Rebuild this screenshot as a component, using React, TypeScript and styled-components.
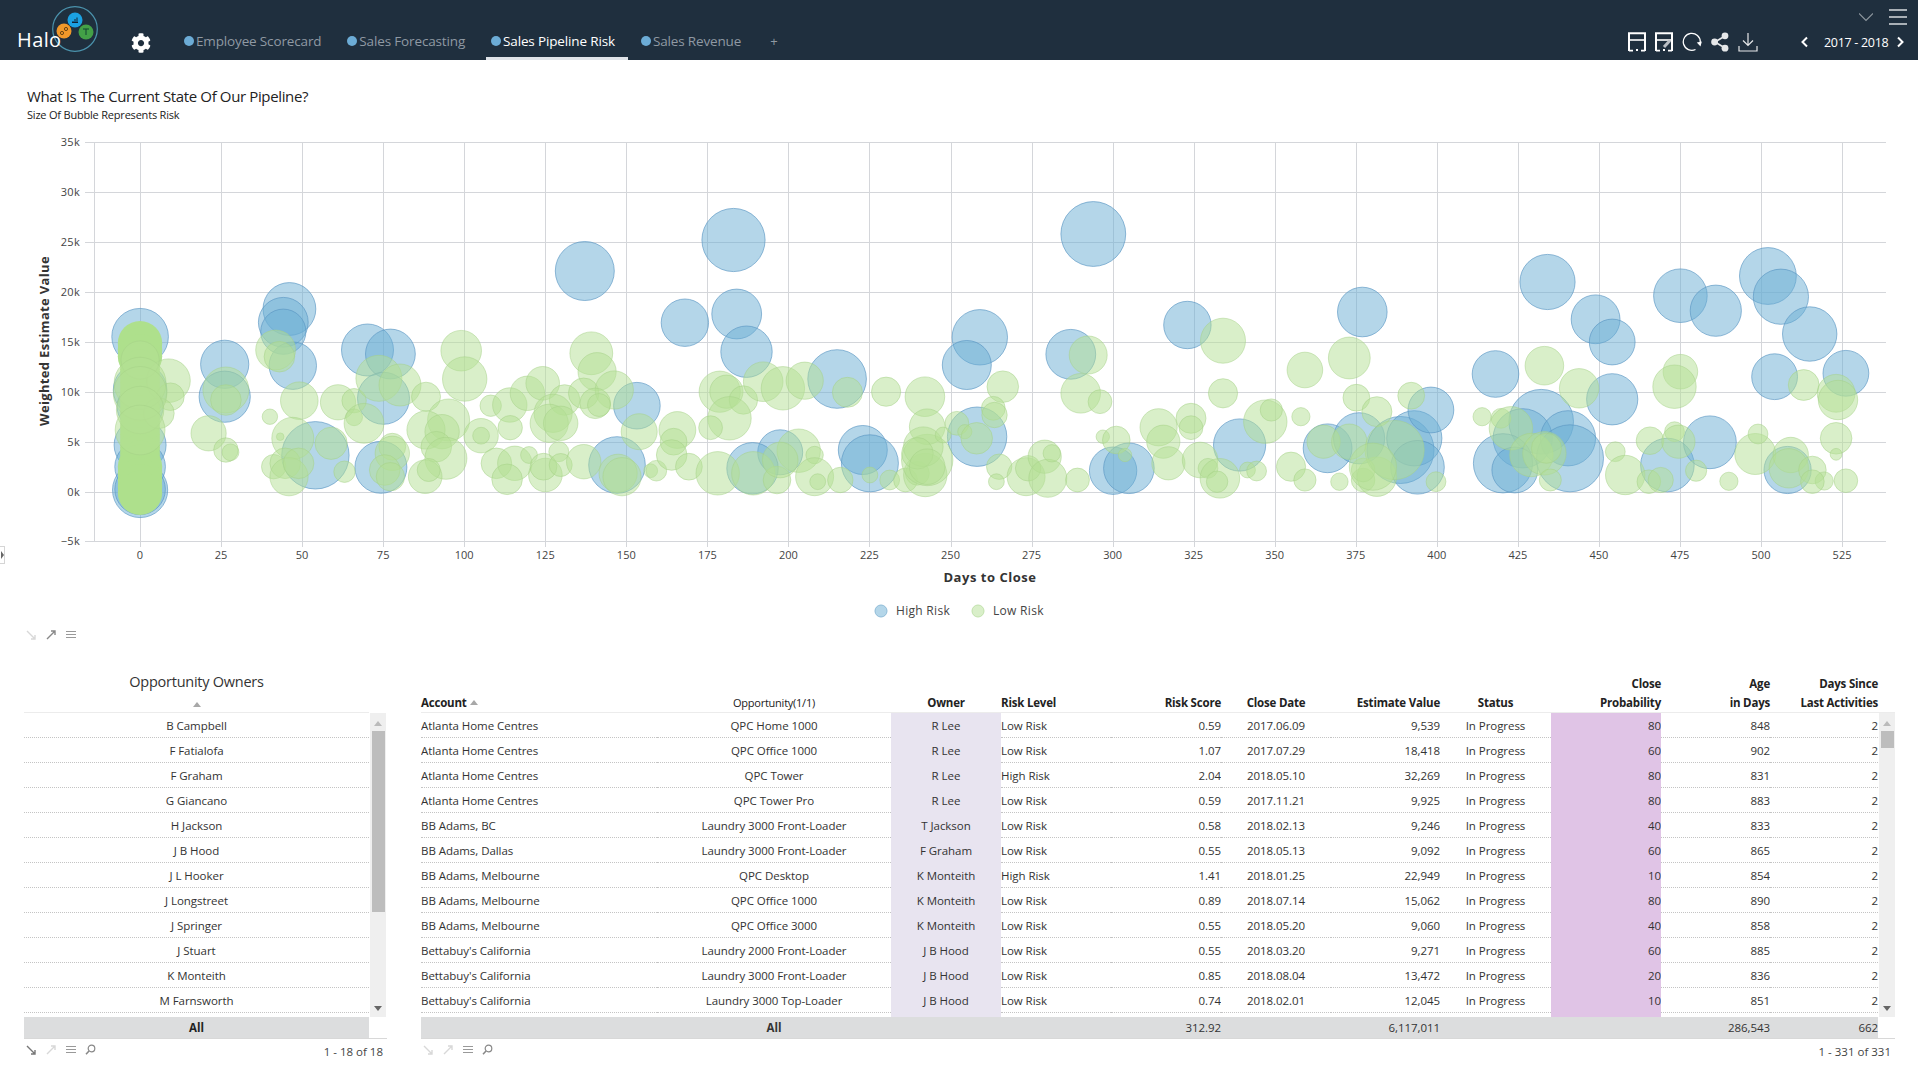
import React from "react";
import styled, { createGlobalStyle } from "styled-components";
import { FaCog } from "react-icons/fa";

const FONT = `"Open Sans", "Noto Sans", "Liberation Sans", sans-serif`;

const Global = createGlobalStyle`
  html, body { margin: 0; padding: 0; background: #fff; }
  body { font-family: ${FONT}; color: #333; overflow: hidden; }
`;

const Page = styled.div`
  width: 1918px;
  height: 1079px;
  position: relative;
  overflow: hidden;
  background: #fff;
`;

/* ---------- header ---------- */
const Header = styled.header`
  height: 60px;
  background: #1f2f3e;
  display: flex;
  align-items: stretch;
`;
const Logo = styled.div`
  position: relative;
  width: 117px;
  flex: none;
`;
const LogoWord = styled.span`
  position: absolute;
  left: 17px;
  top: 26px;
  font-size: 20px;
  line-height: 28px;
  color: #fff;
  letter-spacing: 0.4px;
`;
const LogoMark = styled.svg`
  position: absolute;
  left: 50px;
  top: 4px;
`;
const GearWrap = styled.div`
  width: 62px;
  flex: none;
  color: #fff;
  display: flex;
  align-items: flex-end;
  padding: 0 0 7px 14px;
  box-sizing: border-box;
`;
const Tabs = styled.nav`
  display: flex;
  gap: 8px;
  flex: 1;
`;
const Tab = styled.div<{ $active?: boolean }>`
  height: 60px;
  box-sizing: border-box;
  padding: 32px 13px 0 5px;
  display: flex;
  align-items: flex-start;
  gap: 2px;
  font-size: 13.5px;
  line-height: 18px;
  letter-spacing: -0.15px;
  color: ${(p) => (p.$active ? "#fff" : "#8f99a3")};
  border-bottom: 3px solid ${(p) => (p.$active ? "#dfe3e8" : "transparent")};
`;
const Dot = styled.i`
  width: 10px;
  height: 10px;
  border-radius: 50%;
  background: #6cacd6;
  margin-top: 4px;
  flex: none;
`;
const Plus = styled.div`
  padding: 32px 0 0 8px;
  font-size: 13px;
  line-height: 18px;
  color: #8f99a3;
`;
const HeadRight = styled.div`
  width: 300px;
  flex: none;
  display: flex;
  flex-direction: column;
`;
const HeadTop = styled.div`
  height: 31px;
  display: flex;
  justify-content: flex-end;
  align-items: center;
  padding: 3px 11px 0 0;
  box-sizing: border-box;
  gap: 16px;
`;
const HeadBottom = styled.div`
  display: flex;
  align-items: center;
  color: #fff;
  padding: 1px 0 0 10px;
`;
const IconGroup = styled.div`
  display: flex;
  align-items: center;
  gap: 9px;
  width: 177px;
  flex: none;
`;
const YearNav = styled.div`
  display: flex;
  align-items: center;
  font-size: 12.5px;
  letter-spacing: -0.3px;
  color: #fff;
  gap: 13px;
  margin-left: -6px;
`;
const YearLabel = styled.span`
  margin-right: -7px;
`;

/* ---------- chart ---------- */
const ChartTitle = styled.h1`
  margin: 0;
  padding: 26px 0 0 27px;
  font-size: 15px;
  line-height: 20px;
  font-weight: 400;
  letter-spacing: -0.37px;
  color: #222;
`;
const ChartSub = styled.p`
  margin: 0;
  padding: 1px 0 0 27px;
  font-size: 11px;
  line-height: 16px;
  letter-spacing: -0.2px;
  color: #222;
`;
const ChartSvg = styled.svg`
  display: block;
  width: 1918px;
  height: 496px;
  margin-top: 7px;
  font-family: ${FONT};
`;
const Tools = styled.div<{ $pad?: number }>`
  display: flex;
  align-items: center;
  height: 14px;
  gap: 9px;
  padding-left: ${(p) => p.$pad ?? 8}px;
`;
const ChartToolRow = styled.div`
  padding: 1px 0 0 18px;
  height: 14px;
`;
const EdgeHandle = styled.div`
  position: absolute;
  left: -1px;
  top: 546px;
  width: 6px;
  height: 18px;
  border: 1px solid #d5d5d5;
  box-sizing: border-box;
  background: #fff;
  &::after {
    content: "";
    position: absolute;
    left: 1px;
    top: 4px;
    border-left: 3px solid #666;
    border-top: 4px solid transparent;
    border-bottom: 4px solid transparent;
  }
`;

/* ---------- lower grids ---------- */
const Lower = styled.section`
  display: flex;
  padding: 31px 0 0 24px;
  gap: 34px;
  align-items: flex-start;
`;
const Panel = styled.div<{ $w: number }>`
  width: ${(p) => p.$w}px;
  flex: none;
`;
const OwnersTitle = styled.div`
  width: 345px;
  height: 27px;
  text-align: center;
  font-size: 14.5px;
  line-height: 20px;
  letter-spacing: -0.25px;
  color: #333;
`;
const OwnersHead = styled.div`
  height: 13px;
  display: flex;
  justify-content: center;
  border-bottom: 1px solid #ececec;
  width: 345px;
`;
const Caret = styled.i<{ $up?: boolean; $tone?: string }>`
  display: inline-block;
  width: 0;
  height: 0;
  border-left: 4px solid transparent;
  border-right: 4px solid transparent;
  ${(p) =>
    p.$up
      ? `border-bottom: 5px solid ${p.$tone ?? "#a8a8a8"};`
      : `border-top: 5px solid ${p.$tone ?? "#777"};`}
`;
const OwnersCaret = styled(Caret)`
  margin-top: 3px;
`;
const Body = styled.div`
  display: flex;
  height: 304px;
  overflow: hidden;
`;
const Rows = styled.div<{ $w: number }>`
  width: ${(p) => p.$w}px;
  flex: none;
`;
const OwnerRow = styled.div`
  height: 25px;
  line-height: 25px;
  box-sizing: border-box;
  border-bottom: 1px dotted #c4c4c4;
  text-align: center;
  font-size: 11.5px;
  letter-spacing: -0.05px;
  color: #333;
`;
const Track = styled.div`
  width: 16px;
  margin-left: 1px;
  flex: none;
  background: #efefef;
  display: flex;
  flex-direction: column;
  align-items: center;
  box-sizing: border-box;
  padding: 8px 0 6px;
`;
const Thumb = styled.div<{ $h: number }>`
  width: 13px;
  height: ${(p) => p.$h}px;
  background: #bdbdbd;
  margin-top: 5px;
`;
const Spacer = styled.div`
  flex: 1;
`;
const GRID = "236px 234px 110px 110px 110px 110px 109px 111px 110px 109px 108px";
const GridRow = styled.div`
  display: grid;
  grid-template-columns: ${GRID};
  height: 25px;
`;
const Cell = styled.div<{ $a?: string; $tint?: string }>`
  box-sizing: border-box;
  border-bottom: 1px dotted ${(p) => (p.$tint ? "transparent" : "#c4c4c4")};
  background: ${(p) => p.$tint ?? "transparent"};
  text-align: ${(p) => p.$a ?? "left"};
  line-height: 25px;
  font-size: 11.5px;
  letter-spacing: -0.05px;
  color: #333;
  white-space: nowrap;
  overflow: hidden;
`;
const HeadRow = styled.div`
  display: grid;
  grid-template-columns: ${GRID};
  height: 40px;
  border-bottom: 1px solid #ececec;
  box-sizing: content-box;
  width: 1474px;
`;
const HeadCell = styled.div<{ $a?: string; $thin?: boolean }>`
  display: flex;
  flex-direction: column;
  justify-content: flex-end;
  align-items: ${(p) =>
    p.$a === "right" ? "flex-end" : p.$a === "center" ? "center" : "flex-start"};
  text-align: ${(p) => p.$a ?? "left"};
  font-size: ${(p) => (p.$thin ? "11px" : "11.5px")};
  font-weight: ${(p) => (p.$thin ? 400 : 700)};
  line-height: 19px;
  letter-spacing: ${(p) => (p.$thin ? "-0.25px" : "-0.2px")};
  color: #222;
  white-space: nowrap;
`;
const AccountHead = styled.span`
  display: inline-flex;
  align-items: center;
  gap: 3px;
`;
const TotalBar = styled.div`
  height: 21px;
  border-bottom: 1px solid #d8d8d8;
`;
const TotalLeft = styled.div`
  width: 345px;
  height: 21px;
  background: #dcddde;
  text-align: center;
  font-size: 11.5px;
  font-weight: 700;
  line-height: 21px;
  color: #222;
`;
const TotalGrid = styled.div`
  display: grid;
  grid-template-columns: ${GRID};
  width: 1457px;
  height: 21px;
  background: #dcddde;
`;
const TotalCell = styled.div<{ $a?: string; $bold?: boolean }>`
  font-size: 11.5px;
  line-height: 21px;
  font-weight: ${(p) => (p.$bold ? 700 : 400)};
  text-align: ${(p) => p.$a ?? "left"};
  letter-spacing: -0.05px;
  color: #333;
`;
const Footer = styled.div`
  display: flex;
  justify-content: space-between;
  align-items: flex-start;
  height: 24px;
  padding-top: 3px;
`;
const Count = styled.span`
  font-size: 11.5px;
  line-height: 16px;
  color: #444;
  padding: 2px 4px 0 0;
`;

/* ---------- svg bits ---------- */
const Arrow = ({ c, up }: { c: string; up?: boolean }) => (
  <svg width="11" height="11" viewBox="0 0 11 11">
    {up ? (
      <path d="M1 10 L9 2 M5 2 H9 V6" stroke={c} strokeWidth="1.4" fill="none" />
    ) : (
      <path d="M1 2 L9 10 M5 10 H9 V6" stroke={c} strokeWidth="1.4" fill="none" />
    )}
  </svg>
);
const Lines = ({ c = "#999" }: { c?: string }) => (
  <svg width="10" height="9" viewBox="0 0 10 9">
    <path d="M0 1.5H10M0 4.5H10M0 7.5H10" stroke={c} strokeWidth="1" />
  </svg>
);
const Lens = () => (
  <svg width="11" height="11" viewBox="0 0 11 11">
    <circle cx="6.5" cy="4.5" r="3.3" fill="none" stroke="#888" strokeWidth="1.2" />
    <path d="M4 7 L1 10.2" stroke="#888" strokeWidth="1.5" />
  </svg>
);
const SaveIcon = ({ edit }: { edit?: boolean }) => (
  <svg width="18" height="20" viewBox="0 0 18 20">
    <path d="M1 19 V1.2 H17 V19" fill="none" stroke="#fff" strokeWidth="2" />
    <path d="M1 8 H17" stroke="#fff" strokeWidth="1.6" />
    <path d="M1 18.6 H5 M13 18.6 H17 M8 18 H10" stroke="#fff" strokeWidth="1.8" />
    {edit && <path d="M9 15 L15 8.5" stroke="#b9bec4" strokeWidth="3" />}
  </svg>
);
const RefreshIcon = () => (
  <svg width="20" height="20" viewBox="0 0 20 20">
    <path d="M13.5 17.5 A8.5 8.5 0 1 1 18.3 10" fill="none" stroke="#fff" strokeWidth="1.3" />
    <path d="M14.8 10.5 L18.5 14.5 L19.8 9.5 Z" fill="#fff" />
  </svg>
);
const ShareIcon = () => (
  <svg width="18" height="20" viewBox="0 0 18 20">
    <path d="M4 10 L14 4 M4 10 L14 16" stroke="#e6e8ea" strokeWidth="1.7" />
    <circle cx="3.6" cy="10" r="3.4" fill="#e6e8ea" />
    <circle cx="14" cy="3.8" r="3.4" fill="#e6e8ea" />
    <circle cx="14" cy="16.2" r="3.4" fill="#e6e8ea" />
  </svg>
);
const DownloadIcon = () => (
  <svg width="20" height="20" viewBox="0 0 20 20">
    <path
      d="M10 1 V13 M5 8.5 L10 13.5 L15 8.5 M1 14 V19 H19 V14"
      fill="none"
      stroke="#e6e8ea"
      strokeWidth="1.2"
    />
  </svg>
);
const Chev = ({ d, c = "#fff", w = 2, size = 12 }: { d: string; c?: string; w?: number; size?: number }) => (
  <svg width={size} height={size} viewBox="0 0 12 12">
    <path d={d} fill="none" stroke={c} strokeWidth={w} />
  </svg>
);
const BurgerBars = styled.div`
  width: 18px;
  height: 16px;
  display: flex;
  flex-direction: column;
  justify-content: space-between;
  & > i {
    display: block;
    height: 2px;
    background: #a9b0b6;
  }
`;

/* ---------- data ---------- */
type B = [number, number, number];
const P1: { x0: number; sx: number; blue: B[]; green: B[] } = {
  x0: 90,
  sx: 2.613,
  blue: [
    [131, 620, 74], [131, 780, 70], [131, 830, 60], [131, 945, 68], [131, 1010, 66], [131, 1080, 72], [131, 1078, 66],
    [352, 703, 63], [352, 800, 67], [521, 537, 69], [505, 577, 65], [505, 605, 59], [530, 707, 62],
    [725, 660, 68], [785, 672, 65], [767, 805, 68], [1293, 423, 77], [589, 976, 88], [760, 1012, 68],
    [1429, 827, 61], [1377, 1005, 74],
  ],
  green: [
    [205, 752, 57], [210, 800, 36], [180, 850, 40], [310, 910, 46], [355, 960, 32], [367, 967, 22], [355, 780, 60], [355, 810, 40],
    [470, 860, 20], [497, 920, 10], [485, 660, 52], [495, 680, 40], [547, 812, 49], [648, 817, 46], [690, 812, 32], [690, 862, 22],
    [716, 880, 52], [755, 745, 60], [810, 765, 55], [878, 800, 38], [970, 662, 53], [979, 747, 58], [1047, 827, 28], [1097, 825, 45],
    [1098, 893, 32], [1143, 790, 45], [1183, 760, 44], [1240, 810, 40], [1210, 850, 50], [1200, 880, 50], [1230, 880, 45], [1310, 670, 56],
    [1325, 725, 50], [1290, 790, 40], [1370, 780, 50], [1320, 820, 40], [1330, 825, 30], [937, 870, 55], [878, 900, 50], [920, 905, 45],
    [1022, 917, 45], [1022, 917, 22], [905, 950, 40], [930, 985, 55], [876, 1040, 44], [885, 1020, 30], [1062, 1000, 40], [1110, 1000, 45],
    [1090, 1048, 40], [1147, 975, 22], [1190, 1035, 44], [1185, 1010, 35], [1225, 965, 26], [1230, 1005, 30], [1290, 995, 45], [1435, 905, 47],
    [1380, 1030, 50], [1390, 1040, 50], [1465, 1022, 18], [1480, 1022, 27], [1535, 900, 48], [1525, 935, 35], [1520, 975, 40], [1565, 1010, 35],
    [530, 925, 55], [480, 1010, 32], [510, 1000, 40], [520, 1040, 50], [545, 1000, 40], [630, 940, 42], [665, 1025, 28], [790, 950, 35],
    [790, 970, 45], [770, 1020, 40], [785, 1040, 37],
    [131, 690, 50], [131, 760, 68], [131, 790, 70], [131, 840, 62], [131, 900, 65],
  ],
};
const P2: typeof P1 = {
  x0: 690,
  sx: 2.529,
  blue: [
    [-13, 578, 60], [110, 330, 80], [118, 552, 63], [143, 665, 65], [372, 747, 74], [228, 967, 57], [158, 1015, 65], [437, 960, 62],
    [455, 1000, 72], [733, 622, 70], [700, 705, 62], [726, 920, 75], [963, 673, 63], [1020, 312, 82], [1258, 585, 60], [1070, 1022, 60],
    [1110, 1015, 64], [1390, 945, 66],
  ],
  green: [
    [75, 785, 52], [92, 785, 42], [135, 810, 36], [100, 865, 55], [52, 893, 30], [185, 755, 50], [235, 775, 55], [290, 752, 47],
    [398, 787, 38], [496, 785, 37], [594, 800, 50], [70, 1030, 55], [160, 1030, 55], [220, 1050, 35], [275, 962, 55],
    [228, 990, 45], [315, 975, 22], [315, 1040, 48], [323, 1055, 20], [380, 1050, 32], [455, 1035, 20], [505, 1050, 25], [545, 1050, 30],
    [575, 1030, 30], [595, 1035, 55], [600, 990, 65], [600, 890, 45], [590, 950, 50], [575, 970, 40], [600, 1010, 45], [640, 915, 20],
    [675, 880, 30], [695, 905, 18], [725, 925, 40], [791, 770, 40], [767, 835, 30], [770, 855, 32], [782, 1010, 32], [775, 1055, 20],
    [850, 1040, 48], [855, 1015, 32], [897, 980, 42], [905, 1045, 48], [915, 970, 22], [980, 1050, 30], [988, 790, 50], [1037, 815, 30],
    [1007, 675, 48], [1044, 920, 17], [1078, 930, 35], [1100, 975, 17], [1348, 632, 57], [1348, 790, 37], [1185, 892, 47], [1197, 935, 42],
    [1210, 1000, 42], [1267, 865, 38], [1267, 893, 30], [1290, 990, 45], [1310, 1015, 25], [1340, 1045, 50], [1333, 1055, 27], [1410, 1020, 20],
    [1433, 1023, 25], [1455, 875, 55], [1470, 840, 28], [1545, 860, 23], [1520, 1010, 37], [1555, 1050, 28], [1555, 720, 45],
  ],
};
const P3: typeof P1 = {
  x0: 1300,
  sx: 2.537,
  blue: [
    [158, 546, 63], [70, 955, 62], [150, 925, 65], [255, 960, 85], [290, 925, 70], [332, 840, 58], [298, 1012, 68], [496, 732, 59],
    [628, 456, 70], [612, 875, 82], [565, 925, 75], [515, 1000, 75], [545, 1020, 58], [680, 925, 70], [685, 985, 85], [750, 568, 62],
    [792, 636, 58], [792, 808, 65], [965, 497, 68], [1055, 542, 65], [1187, 438, 72], [1220, 500, 70], [1293, 612, 69], [1204, 740, 58],
    [1385, 730, 58], [932, 1005, 68], [1040, 937, 67], [1237, 1020, 60],
  ],
  green: [
    [125, 684, 53], [143, 803, 34], [195, 845, 38], [282, 797, 34], [60, 935, 42], [125, 935, 45],
    [100, 1055, 22], [160, 1050, 30], [195, 1040, 50], [160, 1020, 30], [240, 960, 75], [185, 1010, 60], [345, 1055, 25],
    [462, 860, 23], [510, 865, 25], [535, 895, 55], [620, 707, 49], [708, 775, 50], [587, 975, 55], [620, 970, 55], [625, 955, 38],
    [635, 1050, 28], [800, 965, 25], [825, 1035, 50], [885, 1055, 30], [965, 725, 44], [950, 770, 55], [888, 932, 35], [950, 905, 25],
    [960, 935, 42], [915, 1050, 32], [1005, 1022, 27], [1088, 1054, 23], [1155, 972, 52], [1162, 912, 25], [1245, 975, 45], [1240, 1015, 50],
    [1300, 1020, 35], [1330, 1053, 23], [1278, 765, 39], [1360, 790, 48], [1365, 810, 50], [1360, 925, 40], [1360, 973, 15], [1385, 1052, 30], [1300, 1055, 30],
  ],
};
const toCircles = (kind: "blue" | "green") =>
  [P1, P2, P3].flatMap((p) =>
    p[kind].map(([x, y, r]) => ({ cx: p.x0 + x / p.sx, cy: 130 + y / 3, r: r / p.sx }))
  );

/* the solid column of many overlapping deals at day 0 */
const CORE = Array.from({ length: 24 }, (_, i) => {
  const y = 640 + i * 19.5;
  return { cy: 130 + y / 3, r: (y < 680 || y > 1000 ? 58 : 52) / 2.613 };
});

const XT = Array.from({ length: 22 }, (_, i) => i * 25);
const YT = [35, 30, 25, 20, 15, 10, 5, 0, -5];
const yAt = (k: number) => 491.5 - k * 9.98;
const xAt = (d: number) => 140 + (d / 25) * 81.05;

const rows: string[][] = [
  ["Atlanta Home Centres", "QPC Home 1000", "R Lee", "Low Risk", "0.59", "2017.06.09", "9,539", "In Progress", "80", "848", "2"],
  ["Atlanta Home Centres", "QPC Office 1000", "R Lee", "Low Risk", "1.07", "2017.07.29", "18,418", "In Progress", "60", "902", "2"],
  ["Atlanta Home Centres", "QPC Tower", "R Lee", "High Risk", "2.04", "2018.05.10", "32,269", "In Progress", "80", "831", "2"],
  ["Atlanta Home Centres", "QPC Tower Pro", "R Lee", "Low Risk", "0.59", "2017.11.21", "9,925", "In Progress", "80", "883", "2"],
  ["BB Adams, BC", "Laundry 3000 Front-Loader", "T Jackson", "Low Risk", "0.58", "2018.02.13", "9,246", "In Progress", "40", "833", "2"],
  ["BB Adams, Dallas", "Laundry 3000 Front-Loader", "F Graham", "Low Risk", "0.55", "2018.05.13", "9,092", "In Progress", "60", "865", "2"],
  ["BB Adams, Melbourne", "QPC Desktop", "K Monteith", "High Risk", "1.41", "2018.01.25", "22,949", "In Progress", "10", "854", "2"],
  ["BB Adams, Melbourne", "QPC Office 1000", "K Monteith", "Low Risk", "0.89", "2018.07.14", "15,062", "In Progress", "80", "890", "2"],
  ["BB Adams, Melbourne", "QPC Office 3000", "K Monteith", "Low Risk", "0.55", "2018.05.20", "9,060", "In Progress", "40", "858", "2"],
  ["Bettabuy's California", "Laundry 2000 Front-Loader", "J B Hood", "Low Risk", "0.55", "2018.03.20", "9,271", "In Progress", "60", "885", "2"],
  ["Bettabuy's California", "Laundry 3000 Front-Loader", "J B Hood", "Low Risk", "0.85", "2018.08.04", "13,472", "In Progress", "20", "836", "2"],
  ["Bettabuy's California", "Laundry 3000 Top-Loader", "J B Hood", "Low Risk", "0.74", "2018.02.01", "12,045", "In Progress", "10", "851", "2"],
  ["", "", "", "", "", "", "", "", "", "", ""],
];
const aligns = ["left", "center", "center", "left", "right", "center", "right", "center", "right", "right", "right"];
const tints: Record<number, string> = { 2: "#e8e4f0", 8: "#e0c4e6" };
const owners = [
  "B Campbell", "F Fatialofa", "F Graham", "G Giancano", "H Jackson", "J B Hood",
  "J L Hooker", "J Longstreet", "J Springer", "J Stuart", "K Monteith", "M Farnsworth", "",
];
const tabs = ["Employee Scorecard", "Sales Forecasting", "Sales Pipeline Risk", "Sales Revenue"];

const Bubbles = ({ kind }: { kind: "blue" | "green" }) => (
  <g
    fill={kind === "blue" ? "rgba(105,173,211,0.5)" : "rgba(179,223,147,0.5)"}
    stroke={kind === "blue" ? "rgba(90,150,195,0.65)" : "rgba(165,210,135,0.5)"}
    strokeWidth="1"
  >
    {toCircles(kind).map((c, i) => (
      <circle key={i} cx={c.cx.toFixed(1)} cy={c.cy.toFixed(1)} r={c.r.toFixed(1)} />
    ))}
  </g>
);

const Chart = () => (
  <ChartSvg viewBox="0 130 1918 496">
    <g stroke="#d4d6da" strokeWidth="1" shapeRendering="crispEdges">
      {YT.map((k) => (
        <line key={k} x1={85} x2={1886} y1={Math.round(yAt(k)) + 0.5} y2={Math.round(yAt(k)) + 0.5} />
      ))}
      <line x1={94.5} x2={94.5} y1={142} y2={541} />
      {XT.map((d) => (
        <line key={d} x1={Math.round(xAt(d)) + 0.5} x2={Math.round(xAt(d)) + 0.5} y1={142} y2={547} />
      ))}
    </g>
    <Bubbles kind="blue" />
    <g fill="#aee08c">
      {CORE.map((c) => (
        <circle key={c.cy} cx={140} cy={c.cy.toFixed(1)} r={c.r.toFixed(1)} />
      ))}
    </g>
    <Bubbles kind="green" />
    <g fontSize="11" fill="#444" textAnchor="end" letterSpacing="0.3">
      {YT.map((k) => (
        <text key={k} x={80} y={yAt(k) + 4}>
          {k === -5 ? "−5k" : `${k}k`}
        </text>
      ))}
    </g>
    <g fontSize="11" fill="#444" textAnchor="middle">
      {XT.map((d) => (
        <text key={d} x={xAt(d)} y={559}>
          {d}
        </text>
      ))}
    </g>
    <text x={990} y={582} textAnchor="middle" fontSize="13" fontWeight="700" fill="#333" letterSpacing="0.53">
      Days to Close
    </text>
    <text
      transform="translate(49 341) rotate(-90)"
      textAnchor="middle"
      fontSize="13"
      fontWeight="700"
      fill="#333"
      letterSpacing="0.33"
    >
      Weighted Estimate Value
    </text>
    <circle cx={881} cy={611} r={6} fill="#b4d6e9" stroke="#8fbcd8" />
    <text x={896} y={615} fontSize="12" fill="#444" letterSpacing="0.3">
      High Risk
    </text>
    <circle cx={978} cy={611} r={6} fill="#d9efc9" stroke="#c2e2ad" />
    <text x={993} y={615} fontSize="12" fill="#444" letterSpacing="0.3">
      Low Risk
    </text>
  </ChartSvg>
);

export default function App() {
  return (
    <Page>
      <Global />
      <Header>
        <Logo>
          <LogoMark width="50" height="50" viewBox="0 0 50 50">
            <circle cx="25" cy="25" r="22.3" fill="none" stroke="#4b93ad" strokeWidth="1.2" />
            <circle cx="25" cy="16" r="7.5" fill="#1ba1e2" />
            <circle cx="14" cy="27" r="7.5" fill="#f0982a" />
            <circle cx="36" cy="28" r="7.5" fill="#43a047" />
            <path d="M22 18.5 H28 M23 17 V18.5 M25 15 V18.5 M27 13.5 V18.5" stroke="#123" strokeWidth="1" />
            <circle cx="12" cy="29" r="1.6" fill="none" stroke="#5a3a10" strokeWidth="0.9" />
            <circle cx="16" cy="25" r="1.6" fill="none" stroke="#5a3a10" strokeWidth="0.9" />
            <path d="M33 25 H39 M36 25 V31" stroke="#143" strokeWidth="1" />
          </LogoMark>
          <LogoWord>Halo</LogoWord>
        </Logo>
        <GearWrap>
          <FaCog size={20} />
        </GearWrap>
        <Tabs>
          {tabs.map((t, i) => (
            <Tab key={t} $active={i === 2}>
              <Dot />
              {t}
            </Tab>
          ))}
          <Plus>+</Plus>
        </Tabs>
        <HeadRight>
          <HeadTop>
            <Chev d="M0 3 L6 9 L12 3" c="#8d969e" w={1} size={14} />
            <BurgerBars>
              <i />
              <i />
              <i />
            </BurgerBars>
          </HeadTop>
          <HeadBottom>
            <IconGroup>
              <SaveIcon />
              <SaveIcon edit />
              <RefreshIcon />
              <ShareIcon />
              <DownloadIcon />
            </IconGroup>
            <YearNav>
              <Chev d="M8 1.5 L3.5 6 L8 10.5" />
              <YearLabel>2017 - 2018</YearLabel>
              <Chev d="M4 1.5 L8.5 6 L4 10.5" />
            </YearNav>
          </HeadBottom>
        </HeadRight>
      </Header>

      <ChartTitle>What Is The Current State Of Our Pipeline?</ChartTitle>
      <ChartSub>Size Of Bubble Represents Risk</ChartSub>
      <Chart />
      <ChartToolRow>
        <Tools $pad={8}>
          <Arrow c="#d8d8d8" />
          <Arrow c="#888" up />
          <Lines />
        </Tools>
      </ChartToolRow>
      <EdgeHandle />

      <Lower>
        <Panel $w={363}>
          <OwnersTitle>Opportunity Owners</OwnersTitle>
          <OwnersHead>
            <OwnersCaret $up />
          </OwnersHead>
          <Body>
            <Rows $w={345}>
              {owners.map((o, i) => (
                <OwnerRow key={i}>{o}</OwnerRow>
              ))}
            </Rows>
            <Track>
              <Caret $up $tone="#bbb" />
              <Thumb $h={181} />
              <Spacer />
              <Caret $tone="#666" />
            </Track>
          </Body>
          <TotalBar>
            <TotalLeft>All</TotalLeft>
          </TotalBar>
          <Footer>
            <Tools $pad={2}>
              <Arrow c="#777" />
              <Arrow c="#d8d8d8" up />
              <Lines />
              <Lens />
            </Tools>
            <Count>1 - 18 of 18</Count>
          </Footer>
        </Panel>

        <Panel $w={1474}>
          <HeadRow>
            <HeadCell>
              <AccountHead>
                Account <Caret $up />
              </AccountHead>
            </HeadCell>
            <HeadCell $a="center" $thin>
              Opportunity(1/1)
            </HeadCell>
            <HeadCell $a="center">Owner</HeadCell>
            <HeadCell>Risk Level</HeadCell>
            <HeadCell $a="right">Risk Score</HeadCell>
            <HeadCell $a="center">Close Date</HeadCell>
            <HeadCell $a="right">Estimate Value</HeadCell>
            <HeadCell $a="center">Status</HeadCell>
            <HeadCell $a="right">
              <span>Close</span>
              <span>Probability</span>
            </HeadCell>
            <HeadCell $a="right">
              <span>Age</span>
              <span>in Days</span>
            </HeadCell>
            <HeadCell $a="right">
              <span>Days Since</span>
              <span>Last Activities</span>
            </HeadCell>
          </HeadRow>
          <Body>
            <Rows $w={1457}>
              {rows.map((r, i) => (
                <GridRow key={i}>
                  {r.map((v, j) => (
                    <Cell key={j} $a={aligns[j]} $tint={tints[j]}>
                      {v}
                    </Cell>
                  ))}
                </GridRow>
              ))}
            </Rows>
            <Track>
              <Caret $up $tone="#bbb" />
              <Thumb $h={17} />
              <Spacer />
              <Caret $tone="#666" />
            </Track>
          </Body>
          <TotalBar>
            <TotalGrid>
              <TotalCell />
              <TotalCell $a="center" $bold>
                All
              </TotalCell>
              <TotalCell />
              <TotalCell />
              <TotalCell $a="right">312.92</TotalCell>
              <TotalCell />
              <TotalCell $a="right">6,117,011</TotalCell>
              <TotalCell />
              <TotalCell />
              <TotalCell $a="right">286,543</TotalCell>
              <TotalCell $a="right">662</TotalCell>
            </TotalGrid>
          </TotalBar>
          <Footer>
            <Tools $pad={2}>
              <Arrow c="#d8d8d8" />
              <Arrow c="#d8d8d8" up />
              <Lines />
              <Lens />
            </Tools>
            <Count>1 - 331 of 331</Count>
          </Footer>
        </Panel>
      </Lower>
    </Page>
  );
}
